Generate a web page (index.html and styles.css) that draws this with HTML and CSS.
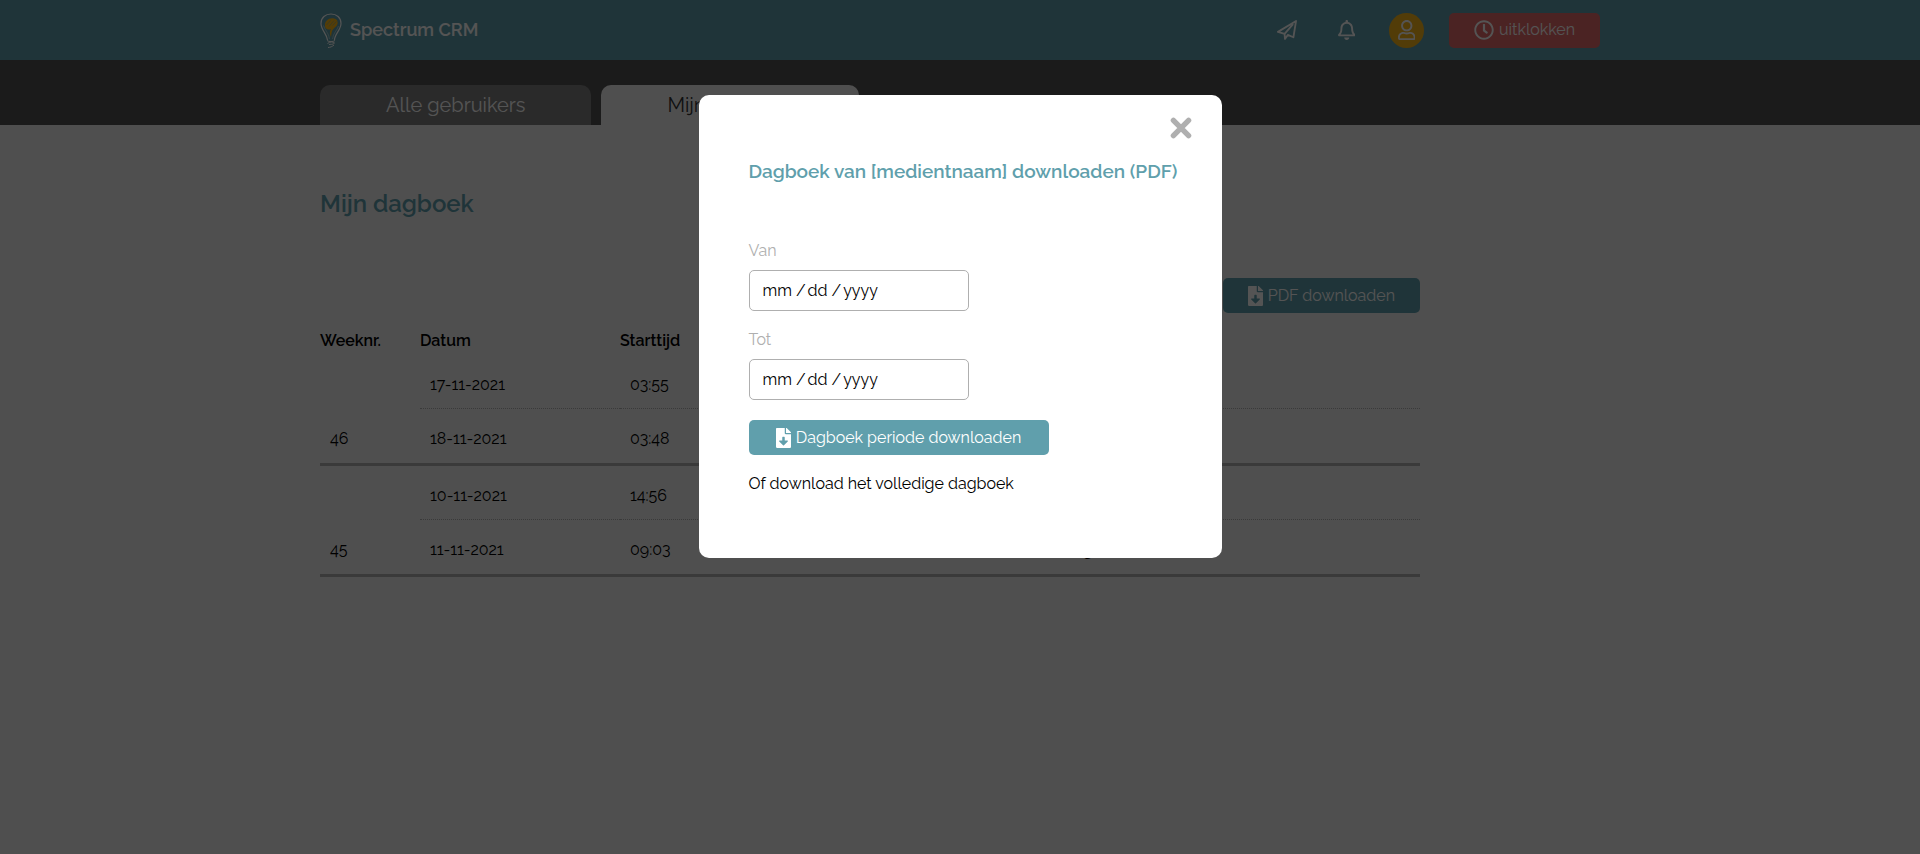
FILE: index.html
```html
<!DOCTYPE html>
<html lang="nl">
<head>
<meta charset="utf-8">
<title>Spectrum CRM</title>
<link rel="stylesheet" href="styles.css">
</head>
<body>
<header class="topbar">
  <div class="container topbar-row">
    <a class="brand" href="#">
      <svg class="brand-logo" viewBox="0 0 22 35" fill="none" stroke="#fff">
        <path d="M7.500 27C7 21 1 17 1 10.500C1 4.500 5.500 1 11 1s10 3.500 10 9.500C21 17 14.500 21 14.500 27" stroke-width="1.200"/>
        <path d="M9.500 26C9 20 4.500 17 3.500 12.500M12.500 26c.5-6 5-9 6-13" stroke-width=".4"/>
        <path d="M7 27.500C9 29 13 29 15 27.500M7.500 30.500C10 28.500 13 28.500 14.500 30C13 32 10 31 9 31.500M8 34.500C10 34.500 12.500 33.500 14 32" stroke-width="1"/>
        <path d="M5 13C4.500 8 9 4.500 14 5.500c4.500 1 4.500 5.500 2 8c-2 2-4 3-4.500 6.500l-.5 4C9.500 20.500 9.500 18.500 11 16C8 17.500 5 16 5 13z" fill="#ffb914" stroke="none"/>
        <path d="M6.500 12l4-4.500M9 13.500l5-6M12.500 12.500l4-4" stroke="#609fac" stroke-width=".5"/>
      </svg>
      <span>Spectrum CRM</span>
    </a>
    <nav class="actions">
      <button class="icon-button" aria-label="Berichten">
        <svg class="icon" viewBox="0 0 512 512" fill="none" stroke="currentColor" stroke-width="46" stroke-linejoin="round" stroke-linecap="round"><path d="M24 304L488 24L420 442L276 382L204 484L194 354L24 304M194 354L400 120M276 382L204 484"/></svg>
      </button>
      <button class="icon-button" aria-label="Meldingen">
        <svg class="icon" viewBox="0 0 448 512" fill="currentColor"><path d="M439.390 362.290c-19.320-20.760-55.470-51.990-55.470-154.290 0-77.700-54.480-139.900-127.940-155.160V32c0-17.670-14.320-32-31.980-32s-31.980 14.330-31.980 32v20.840C118.560 68.100 64.080 130.300 64.080 208c0 102.300-36.150 133.530-55.470 154.290-6 6.450-8.660 14.160-8.610 21.710.11 16.400 12.980 32 32.100 32h383.800c19.120 0 32-15.600 32.100-32 .05-7.550-2.610-15.270-8.610-21.710zM67.530 368c21.220-27.970 44.420-74.330 44.530-159.420 0-.2-.06-.38-.06-.58 0-61.860 50.140-112 112-112s112 50.140 112 112c0 .2-.06.38-.06.58.11 85.100 23.310 131.460 44.530 159.420H67.530zM224 512c35.320 0 63.970-28.650 63.970-64H160.030c0 35.350 28.650 64 63.970 64z"/></svg>
      </button>
      <button class="avatar" aria-label="Profiel">
        <svg class="icon" viewBox="0 0 448 512" fill="currentColor"><path d="M313.600 304c-28.700 0-42.500 16-89.600 16s-60.800-16-89.600-16C60.200 304 0 364.200 0 438.400V464c0 26.500 21.500 48 48 48h352c26.500 0 48-21.500 48-48v-25.600c0-74.200-60.200-134.400-134.400-134.400zM400 464H48v-25.600c0-47.600 38.800-86.400 86.400-86.400 14.600 0 38.300 16 89.600 16 51.700 0 74.900-16 89.600-16 47.600 0 86.400 38.800 86.400 86.400V464zM224 288c79.500 0 144-64.500 144-144S303.500 0 224 0 80 64.500 80 144s64.500 144 144 144zm0-240c52.900 0 96 43.100 96 96s-43.100 96-96 96-96-43.100-96-96 43.100-96 96-96z"/></svg>
      </button>
      <button class="button danger">
        <svg class="icon" viewBox="0 0 512 512" fill="currentColor"><path d="M256 8C119 8 8 119 8 256s111 248 248 248 248-111 248-248S393 8 256 8zm0 448c-110.500 0-200-89.500-200-200S145.500 56 256 56s200 89.500 200 200-89.500 200-200 200zm61.800-104.400l-84.900-61.700c-3.100-2.300-4.900-5.900-4.900-9.700V116c0-6.600 5.400-12 12-12h32c6.600 0 12 5.400 12 12v141.700l66.800 48.600c5.400 3.900 6.500 11.400 2.600 16.800L334.600 349c-3.900 5.300-11.400 6.500-16.800 2.600z"/></svg>
        uitklokken
      </button>
    </nav>
  </div>
</header>
<div class="tabbar">
  <nav class="container tabs">
    <a class="tab" href="#">Alle gebruikers</a>
    <a class="tab active" href="#">Mijn dagboek</a>
  </nav>
</div>
<main class="container">
  <div class="content">
    <h1 class="page-title">Mijn dagboek</h1>
    <div class="toolbar">
      <button class="button">
        <svg class="icon" viewBox="0 0 384 512" fill="currentColor"><path d="M224 136V0H24C10.700 0 0 10.700 0 24v464c0 13.300 10.700 24 24 24h336c13.300 0 24-10.700 24-24V160H248c-13.200 0-24-10.800-24-24zm76.450 211.360l-96.420 95.700c-6.650 6.610-17.390 6.610-24.040 0l-96.420-95.700C73.420 337.290 80.540 320 94.820 320H160v-80c0-8.840 7.160-16 16-16h32c8.840 0 16 7.160 16 16v80h65.180c14.280 0 21.400 17.290 11.270 27.360zM377 105L279.100 7c-4.500-4.500-10.600-7-17-7H256v128h128v-6.100c0-6.300-2.500-12.400-7-16.900z"/></svg>
        PDF downloaden
      </button>
    </div>
    <table class="diary">
      <colgroup><col class="col-week"><col class="col-date"><col class="col-date"><col class="col-end"><col></colgroup>
      <thead>
        <tr><th>Weeknr.</th><th>Datum</th><th>Starttijd</th><th></th><th></th></tr>
      </thead>
      <tbody>
        <tr><td></td><td>17-11-2021</td><td>03:55</td><td></td><td></td></tr>
        <tr class="week-end"><td>46</td><td>18-11-2021</td><td>03:48</td><td></td><td></td></tr>
        <tr><td></td><td>10-11-2021</td><td>14:56</td><td></td><td></td></tr>
        <tr class="week-end"><td>45</td><td>11-11-2021</td><td>09:03</td><td></td><td>g</td></tr>
      </tbody>
    </table>
  </div>
</main>
<div class="overlay">
  <section class="modal" role="dialog" aria-modal="true" aria-labelledby="modal-title">
    <button class="close" aria-label="Sluiten">
      <svg class="close-icon" viewBox="0 0 24 24" fill="none" stroke="currentColor" stroke-width="5" stroke-linecap="round"><path d="M5 5l14 14M19 5L5 19"/></svg>
    </button>
    <h2 class="modal-title" id="modal-title">Dagboek van [medientnaam] downloaden (PDF)</h2>
    <form class="period">
      <label class="label" for="from">Van</label>
      <input class="date" id="from" type="date">
      <label class="label" for="to">Tot</label>
      <input class="date" id="to" type="date">
      <button class="button wide" type="button">
        <svg class="icon" viewBox="0 0 384 512" fill="currentColor"><path d="M224 136V0H24C10.700 0 0 10.700 0 24v464c0 13.300 10.700 24 24 24h336c13.300 0 24-10.700 24-24V160H248c-13.200 0-24-10.800-24-24zm76.450 211.360l-96.420 95.700c-6.650 6.610-17.390 6.610-24.040 0l-96.420-95.700C73.420 337.290 80.540 320 94.820 320H160v-80c0-8.840 7.160-16 16-16h32c8.840 0 16 7.160 16 16v80h65.180c14.280 0 21.400 17.290 11.270 27.360zM377 105L279.100 7c-4.500-4.500-10.600-7-17-7H256v128h128v-6.100c0-6.300-2.500-12.400-7-16.900z"/></svg>
        Dagboek periode downloaden
      </button>
    </form>
    <a class="full-download" href="#">Of download het volledige dagboek</a>
  </section>
</div>
</body>
</html>
```
FILE: styles.css
```css
* { box-sizing: border-box; }
body {
  margin: 0;
  background: #f0f0f0;
  color: #000;
  font-family: Raleway, Lato, "Open Sans", sans-serif;
  font-size: 16px;
  line-height: 20px;
}
a { color: inherit; text-decoration: none; }
button, input { font: inherit; }
button { border: 0; cursor: pointer; }
.container { max-width: 1280px; margin: 0 auto; }

.topbar { background: #609fac; color: #fff; }
.topbar-row { display: flex; justify-content: space-between; align-items: center; height: 60px; }
.brand { display: flex; align-items: center; gap: 8px; font-size: 18px; font-weight: 600; }
.brand-logo { width: 22px; height: 35px; }
.actions { display: flex; align-items: center; gap: 25px; }
.icon { height: 20px; flex: none; }
.icon-button { display: flex; justify-content: center; width: 35px; padding: 0; background: none; color: #fff; }
.avatar {
  display: flex; align-items: center; justify-content: center;
  width: 35px; height: 35px; padding: 0;
  border-radius: 50%; background: #f8b51b; color: #fff;
}
.button {
  display: inline-flex; align-items: center; justify-content: center; gap: 5px;
  height: 35px; padding: 0 25px;
  border-radius: 5px; background: #609fac; color: #fff;
}
.button.danger { background: #e46b6b; }
.button.wide { width: 300px; }

.tabbar { background: #535353; padding-top: 25px; }
.tabs { display: flex; gap: 10px; font-size: 20px; }
.tab { height: 40px; padding: 10px 66px; border-radius: 10px 10px 0 0; background: #808080; color: #fff; }
.tab.active { background: #f0f0f0; color: #333; }

.content { max-width: 1100px; padding-top: 60px; }
.page-title { margin: 0; font-size: 24px; font-weight: 600; line-height: 38px; color: #609fac; }
.toolbar { display: flex; justify-content: flex-end; margin-top: 55px; }
.diary { width: 100%; table-layout: fixed; border-collapse: separate; border-spacing: 0; margin-top: 14px; }
.diary th { padding: 4px 0; text-align: left; font-weight: 600; }
.diary td { height: 54px; padding: 6px 10px 0; border-bottom: 1px dotted #afafaf; }
.diary td:first-child { border-bottom-color: transparent; }
.diary .week-end td { height: 57px; border-bottom: 3px solid #afafaf; }
.col-week { width: 100px; }
.col-date { width: 200px; }
.col-end { width: 253px; }

.overlay {
  position: fixed; inset: 0;
  display: flex; justify-content: center; align-items: flex-start;
  padding-top: 95px;
  background: rgba(0, 0, 0, .67);
}
.modal {
  display: flex; flex-direction: column;
  width: 523px; max-width: 100%;
  padding: 20px 50px 64px;
  border-radius: 10px; background: #fff;
}
.close { align-self: flex-end; display: flex; margin-right: -22px; padding: 0; background: none; color: #afafaf; }
.close-icon { width: 26px; height: 26px; }
.modal-title { margin: 20px 0 0; font-size: 19px; font-weight: 600; white-space: nowrap; color: #609fac; }
.period { display: flex; flex-direction: column; align-items: flex-start; margin-top: 59px; }
.label { line-height: 22px; margin-bottom: 8px; color: #afafaf; }
.date {
  width: 220px; height: 41px; margin-bottom: 18px; padding: 0 12px;
  border: 1px solid #afafaf; border-radius: 5px; background: #fff; color: #000;
}
.period .button { margin-top: 2px; }
.date::-webkit-calendar-picker-indicator { display: none; }
.date::-webkit-datetime-edit-text { padding: 0 1px 0 3px; }
.full-download { margin-top: 19px; }
```
